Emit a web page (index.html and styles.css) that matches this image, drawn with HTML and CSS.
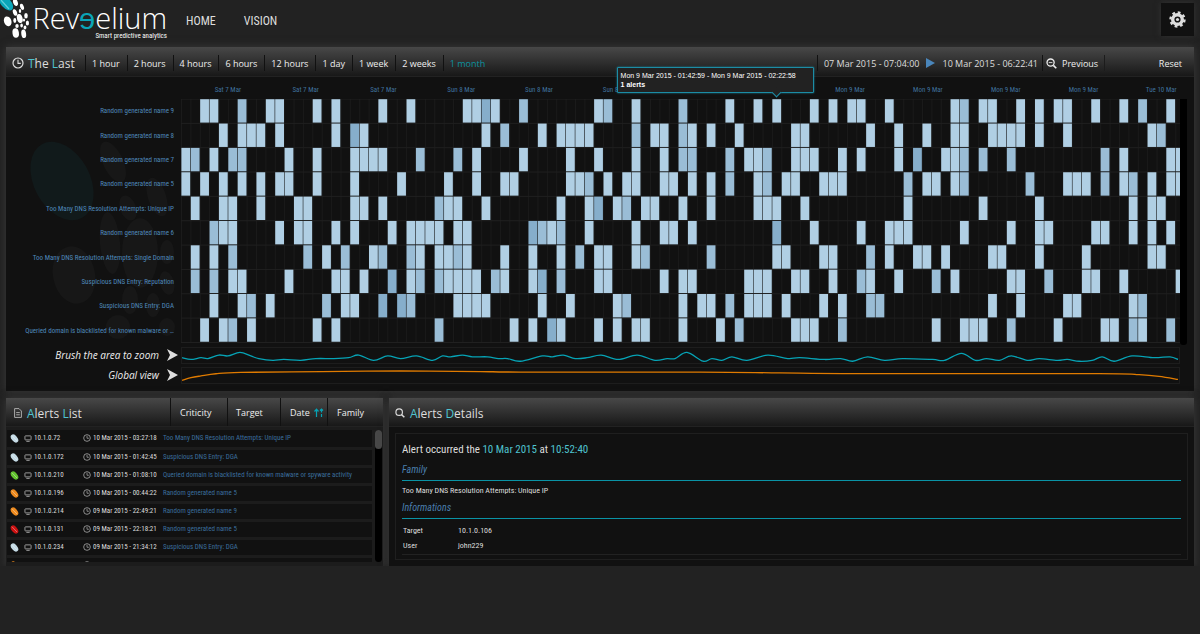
FILE: index.html
```
<!DOCTYPE html>
<html lang="en">
<head>
    <meta charset="UTF-8">
    <meta name="viewport" content="width=device-width, initial-scale=1.0">
    <title>Reveelium</title>
    <link rel="stylesheet" href="styles.css">
</head>
<body>
    <svg class="defs" width="0" height="0">
        <symbol id="icon-clock" viewBox="0 0 12 12">
            <circle cx="6" cy="6" r="5" fill="none" stroke="currentColor" stroke-width="1.2"/>
            <path d="M6 2.8V6.4H8.8" fill="none" stroke="currentColor" stroke-width="1.1"/>
        </symbol>
        <symbol id="icon-screen" viewBox="0 0 9 8">
            <rect x="1" y="1" width="7" height="4.6" rx=".6" fill="none" stroke="currentColor"/>
            <path d="M2.6 7.3h3.8" stroke="currentColor"/>
        </symbol>
        <symbol id="icon-search" viewBox="0 0 12 12">
            <circle cx="5" cy="5" r="3.9" fill="none" stroke="currentColor" stroke-width="1.4"/>
            <path d="M8 8l3.2 3.2" stroke="currentColor" stroke-width="1.8"/>
        </symbol>
        <symbol id="icon-leaf" viewBox="0 0 10 10">
            <ellipse cx="5" cy="5" rx="3.2" ry="5.2" transform="rotate(-40 5 5)" fill="currentColor"/>
            <path d="M2 1.8L8 8" stroke="#fff" stroke-width=".7" opacity=".6"/>
        </symbol>
    </svg>

    <header class="topbar">
        <a href="#" class="logo">
            <svg class="logo-mark" viewBox="0 0 31 40">
                <ellipse cx="6" cy="3" rx="5" ry="9" transform="rotate(-42 6 3)" fill="#0aa5b8"/>
                <path d="M1 0L9 9" stroke="#5fd0dc" stroke-width="1.2"/>
                <g fill="#fff">
                    <ellipse cx="15.5" cy="2.5" rx="2.3" ry="3.6" transform="rotate(-20 15.5 2.5)"/>
                    <ellipse cx="22" cy="6.8" rx="1.8" ry="3.2" transform="rotate(-20 22 6.8)"/>
                    <ellipse cx="15" cy="12.5" rx="2" ry="3.4" transform="rotate(-20 15 12.5)"/>
                    <ellipse cx="20" cy="11" rx="1.2" ry="2"/>
                    <ellipse cx="7.7" cy="21.3" rx="3.7" ry="5" transform="rotate(-20 7.7 21.3)"/>
                    <ellipse cx="19.8" cy="18.5" rx="2.8" ry="4.6" transform="rotate(-15 19.8 18.5)"/>
                    <ellipse cx="14.8" cy="20.5" rx="1.5" ry="2.4"/>
                    <ellipse cx="26" cy="15.7" rx="1.8" ry="2.8"/>
                    <ellipse cx="24" cy="20" rx="1.1" ry="1.6"/>
                    <ellipse cx="27.4" cy="23" rx="1.6" ry="2.6"/>
                    <ellipse cx="17" cy="26" rx="1.7" ry="1.9"/>
                    <ellipse cx="21.6" cy="25.6" rx="1.3" ry="2"/>
                    <ellipse cx="25" cy="27.6" rx="1.4" ry="2"/>
                    <ellipse cx="15.7" cy="33" rx="3.2" ry="4.8" transform="rotate(-8 15.7 33)"/>
                    <ellipse cx="23.7" cy="33.8" rx="2.4" ry="4.3" transform="rotate(-8 23.7 33.8)"/>
                </g>
            </svg>
            <span class="logo-text">
                <span class="logo-name">Rev<em>ɘ</em>elium</span>
                <span class="logo-tag">Smart predictive analytics</span>
            </span>
        </a>
        <nav class="nav">
            <a href="#">HOME</a>
            <a href="#">VISION</a>
        </nav>
        <button class="settings" aria-label="Settings">
            <svg width="17" height="17" viewBox="0 0 17 17">
                <circle cx="8.5" cy="8.5" r="4.8" fill="none" stroke="#ddd" stroke-width="3.4"/>
                <circle cx="8.5" cy="8.5" r="7" fill="none" stroke="#ddd" stroke-width="2.4" stroke-dasharray="2.75 2.75"/>
                <circle cx="8.5" cy="8.5" r="1.6" fill="#ddd"/>
            </svg>
        </button>
    </header>

    <main>
        <section class="panel timeline">
            <div class="panel-head">
                <h2><svg width="12" height="12"><use href="#icon-clock"/></svg><span><b>T</b>he <b>L</b>ast</span></h2>
                <div class="ranges">
                    <button>1 hour</button>
                    <button>2 hours</button>
                    <button>4 hours</button>
                    <button>6 hours</button>
                    <button>12 hours</button>
                    <button>1 day</button>
                    <button>1 week</button>
                    <button>2 weeks</button>
                    <button class="active">1 month</button>
                </div>
                <div class="period">
                    <span>07 Mar 2015 - 07:04:00</span>
                    <svg width="9" height="10" viewBox="0 0 9 10"><path d="M0 0L9 5L0 10z" fill="#4a86bb"/></svg>
                    <span>10 Mar 2015 - 06:22:41</span>
                </div>
                <button class="previous">
                    <svg width="11" height="11" viewBox="0 0 12 12"><use href="#icon-search"/><path d="M3 5h4" stroke="#ddd"/></svg>
                    Previous
                </button>
                <button class="reset">Reset</button>
            </div>

            <div class="chart">
                <svg class="watermark" viewBox="0 0 190 310">
                    <g fill="#171717">
                        <ellipse cx="56" cy="104" rx="28" ry="42" transform="rotate(-28 56 104)" fill="#111a1b"/>
                        <ellipse cx="68" cy="198" rx="21" ry="29" transform="rotate(-12 68 198)"/>
                        <ellipse cx="107" cy="85" rx="10" ry="22" transform="rotate(-25 107 85)"/>
                        <ellipse cx="151" cy="120" rx="9" ry="20" transform="rotate(-18 151 120)"/>
                        <ellipse cx="122" cy="131" rx="8" ry="13" transform="rotate(-20 122 131)"/>
                        <ellipse cx="104" cy="166" rx="10" ry="31" transform="rotate(-5 104 166)"/>
                        <ellipse cx="134" cy="176" rx="18" ry="35"/>
                        <ellipse cx="161" cy="175" rx="7" ry="12"/>
                        <ellipse cx="161" cy="206" rx="7" ry="12" transform="rotate(-15 161 206)"/>
                        <ellipse cx="124" cy="223" rx="8" ry="14"/>
                        <ellipse cx="147" cy="228" rx="7" ry="12"/>
                        <ellipse cx="112" cy="250" rx="12" ry="12"/>
                        <ellipse cx="161" cy="250" rx="8" ry="9"/>
                    </g>
                </svg>

                <ul class="labels">
                    <li>Random generated name 9</li>
                    <li>Random generated name 8</li>
                    <li>Random generated name 7</li>
                    <li>Random generated name 5</li>
                    <li>Too Many DNS Resolution Attempts: Unique IP</li>
                    <li>Random generated name 6</li>
                    <li>Too Many DNS Resolution Attempts: Single Domain</li>
                    <li>Suspicious DNS Entry: Reputation</li>
                    <li>Suspicious DNS Entry: DGA</li>
                    <li>Queried domain is blacklisted for known malware or …</li>
                </ul>

                <div class="plot">
                    <div class="axis" id="axis"></div>
                    <svg class="heatmap" id="heatmap" viewBox="0 0 999 244" preserveAspectRatio="none"></svg>
                    <div class="tooltip">
                        Mon 9 Mar 2015 - 01:42:59 - Mon 9 Mar 2015 - 02:22:58<br>
                        <strong>1 alerts</strong>
                    </div>
                </div>
                <div class="track"></div>

                <div class="brush-label">Brush the area to zoom
                    <svg width="11" height="12" viewBox="0 0 11 12"><path d="M0 0L11 6L0 12L3 6z" fill="#ddd"/></svg>
                </div>
                <svg class="brush" viewBox="0 0 999 17" preserveAspectRatio="none"><path id="brush-line" stroke="#06a3b5"/></svg>
                <div class="brush-label">Global view
                    <svg width="11" height="12" viewBox="0 0 11 12"><path d="M0 0L11 6L0 12L3 6z" fill="#ddd"/></svg>
                </div>
                <svg class="brush" viewBox="0 0 999 17" preserveAspectRatio="none"><path id="global-line" stroke="#e07b00"/></svg>
            </div>
        </section>

        <div class="bottom">
            <section class="panel list">
                <div class="panel-head">
                    <h2><svg width="8" height="10" viewBox="0 0 8 10"><path d="M.6.6h4.4l2.4 2.4v6.4H.6zM2.2 4.6h3.6M2.2 6.8h3.6" fill="none" stroke="#aaa"/></svg><span><b>A</b>lerts <b>L</b>ist</span></h2>
                    <div class="sorts">
                        <button>Criticity</button>
                        <button>Target</button>
                        <button>Date <svg width="10" height="9" viewBox="0 0 10 9"><path d="M2.5 9V1.5M.5 3.5l2-2.4 2 2.4M7.5 9V6M7.5 4.5v-3M6 2.5l1.5-1.4L9 2.5" fill="none" stroke="#06a3b5" stroke-width="1.2"/></svg></button>
                        <button>Family</button>
                    </div>
                </div>
                <div class="list-body">
                    <div class="rows">
                        <table><tbody id="alerts"></tbody></table>
                    </div>
                    <div class="scroll"><div class="thumb"></div></div>
                </div>
            </section>

            <section class="panel details">
                <div class="panel-head">
                    <h2><svg width="10" height="10"><use href="#icon-search"/></svg><span><b>A</b>lerts <b>D</b>etails</span></h2>
                </div>
                <div class="details-body">
                    <p class="occurred">Alert occurred the <b>10 Mar 2015</b> at <b>10:52:40</b></p>
                    <h3>Family</h3>
                    <p class="family">Too Many DNS Resolution Attempts: Unique IP</p>
                    <h3>Informations</h3>
                    <table class="infos">
                        <tr><th>Target</th><td>10.1.0.106</td></tr>
                        <tr><th>User</th><td>john229</td></tr>
                    </table>
                </div>
            </section>
        </div>
    </main>
    <script src="script.js"></script>
</body>
</html>
```
FILE: styles.css
```
* {
    box-sizing: border-box;
}
body {
    margin: 0;
    background: #222;
    color: #ddd;
    font-family: "Open Sans", "Noto Sans", sans-serif;
    font-size: 9px;
}
a {
    color: inherit;
    text-decoration: none;
}
h2, h3, p, ul {
    margin: 0;
    padding: 0;
    font-weight: normal;
}
button {
    padding: 0;
    border: none;
    background: none;
    color: #eee;
    font: inherit;
    white-space: nowrap;
    cursor: pointer;
}
table {
    border-collapse: collapse;
}
.defs {
    position: absolute;
}

/* top bar */
.topbar {
    display: flex;
    height: 47px;
    padding-right: 6px;
}
.logo {
    display: flex;
    width: 167px;
}
.logo-mark {
    width: 31px;
    height: 40px;
}
.logo-text {
    display: flex;
    flex-direction: column;
    align-items: flex-end;
    flex: 1;
    color: #fff;
}
.logo-name {
    font-family: "Open Sans", sans-serif;
    font-weight: 300;
    font-size: 29px;
    line-height: 36px;
    height: 30px;
}
.logo-name em {
    font-style: normal;
    font-weight: 400;
    color: #0aa5b8;
}
.logo-tag {
    font-family: "Roboto Condensed", Roboto, sans-serif;
    font-size: 7px;
    line-height: 12px;
}
.nav {
    display: flex;
    flex: 1;
    gap: 28px;
    padding: 11px 0 0 19px;
    font-family: "Roboto Condensed", Roboto, sans-serif;
    font-size: 12px;
    line-height: 20px;
}
.settings {
    display: flex;
    align-items: center;
    justify-content: center;
    width: 33px;
    height: 33px;
    margin-top: 3px;
    background: #111;
    box-shadow: 0 0 6px #333;
}

/* panels */
main {
    display: flex;
    flex-direction: column;
    gap: 7px;
    padding: 0 6px;
}
.panel {
    background: #111;
    box-shadow: 0 0 8px #3a3a3a;
}
.panel-head {
    display: flex;
    height: 30px;
    background: linear-gradient(#484848, #181818);
    border-bottom: 1px solid #222;
}
.panel-head h2 {
    display: flex;
    align-items: center;
    gap: 4px;
    padding: 2px 0 0 6px;
    color: #ddd;
    font-size: 12px;
}
.panel-head b {
    font-weight: normal;
    color: #4fc3cf;
}

/* timeline */
.timeline .panel-head {
    align-items: center;
    padding-top: 3px;
}
.timeline h2 {
    width: 79px;
    padding-top: 0;
}
.ranges {
    display: flex;
    flex: 1;
}
.ranges button {
    height: 16px;
    padding: 0 7px 0 6px;
    border-left: 1px solid #111;
}
.ranges .active {
    color: #0c93a0;
}
.period {
    display: flex;
    align-items: center;
    gap: 7px;
    height: 16px;
    padding: 0 4px 0 6px;
    border-left: 1px solid #111;
}
.previous {
    display: flex;
    align-items: center;
    gap: 5px;
    width: 63px;
    height: 16px;
    padding-left: 3px;
    border-left: 1px solid #111;
    border-right: 1px solid #1c1c1c;
}
.reset {
    width: 89px;
    padding-right: 12px;
    text-align: right;
}
.chart {
    position: relative;
    display: grid;
    grid-template-columns: 175px 1fr 14px;
    grid-template-rows: 266px 20px 20px;
    padding-bottom: 8px;
}
.watermark {
    position: absolute;
    top: 0;
    left: 0;
    width: 190px;
}
.labels {
    position: relative;
    display: grid;
    grid-auto-rows: 1fr;
    padding: 22px 7px 0 0;
    list-style: none;
    text-align: right;
    white-space: nowrap;
    font-family: "Roboto Condensed", Roboto, sans-serif;
    font-size: 7px;
    color: #4f88ba;
}
.labels li {
    display: flex;
    align-items: center;
    justify-content: flex-end;
}
.plot {
    position: relative;
    display: flex;
    flex-direction: column;
    min-width: 0;
}
.axis {
    display: flex;
    height: 22px;
    padding-left: 8px;
    font-family: "Roboto Condensed", Roboto, sans-serif;
    font-size: 7px;
    line-height: 27px;
    color: #3f709c;
}
.axis span {
    flex: 0 0 7.85%;
    text-align: center;
    white-space: nowrap;
}
.heatmap {
    display: block;
    width: 100%;
    height: 244px;
}
.track {
    width: 7px;
    height: 246px;
    margin-top: 22px;
    border-radius: 0 0 3px 3px;
    background: #000;
}
.tooltip {
    position: absolute;
    top: -10px;
    left: 43.6%;
    width: 197px;
    padding: 3px;
    border: 1px solid #1c8ca5;
    border-radius: 1px;
    background: #222;
    box-shadow: 0 0 2px #1c8ca5;
    color: #fff;
    font-family: "Liberation Sans", Arial, sans-serif;
    font-size: 7px;
    line-height: 9px;
    white-space: nowrap;
}
.tooltip::after {
    content: "";
    position: absolute;
    right: 33px;
    bottom: -4px;
    width: 6px;
    height: 6px;
    border: solid #1c8ca5;
    border-width: 0 1px 1px 0;
    background: #222;
    transform: rotate(45deg);
}
.brush-label {
    position: relative;
    display: flex;
    grid-column: 1;
    align-items: center;
    justify-content: flex-end;
    gap: 8px;
    padding: 3px 3px 0 0;
    color: #eee;
    font-size: 10px;
    font-style: italic;
}
.brush {
    grid-column: 2;
    width: 100%;
    height: 17px;
    margin-top: 4px;
    border: 1px solid #1d1d1d;
}
.brush path {
    fill: none;
    stroke-width: 1.3;
    vector-effect: non-scaling-stroke;
}

/* bottom panels */
.bottom {
    display: grid;
    grid-template-columns: 377px 1fr;
    gap: 6px;
}
.list .panel-head, .details .panel-head {
    height: 29px;
}
.list {
    background: #1c1c1c;
}
.list h2 {
    flex: 1;
    padding-left: 8px;
    gap: 5px;
}
.details h2 {
    gap: 5px;
}
.sorts {
    display: flex;
}
.sorts button {
    width: 57px;
    padding: 0 9px;
    border-left: 1px solid #111;
    text-align: left;
}
.sorts button:nth-child(2) {
    width: 53px;
    padding: 0 8px;
}
.sorts button:nth-child(3) {
    display: flex;
    align-items: center;
    gap: 4px;
    width: 47px;
    padding: 0 0 0 9px;
}
.sorts button:nth-child(4) {
    width: 56px;
}
.list-body {
    display: flex;
    justify-content: space-between;
    padding: 3px 1px;
}
.rows {
    width: 365px;
    height: 132px;
    overflow: hidden;
}
.rows table {
    width: 100%;
    font-family: "Roboto Condensed", Roboto, sans-serif;
    font-size: 7px;
    color: #ddd;
}
.rows td {
    height: 18px;
    padding: 0;
    border-bottom: 3px solid #1c1c1c;
    background: #111;
    white-space: nowrap;
}
.rows td svg {
    display: inline-block;
    vertical-align: middle;
    margin-right: 2px;
    color: #aaa;
}
.rows td:first-child {
    width: 17px;
    padding-left: 3px;
}
.rows td:nth-child(2) {
    width: 59px;
}
.rows td:nth-child(3) {
    width: 80px;
}
.rows td:last-child {
    color: #3b6d9c;
}
.rows .info {
    color: #c5dbe6;
}
.rows .low {
    color: #62c22e;
}
.rows .medium {
    color: #ee8a1d;
}
.rows .high {
    color: #cc1111;
}
.scroll {
    width: 7px;
    border-radius: 4px;
    background: #000;
}
.thumb {
    height: 19px;
    border-radius: 4px;
    background: #484848;
}
.details-body {
    margin: 6px;
    padding: 4px 6px;
    border: 1px solid #1f1f1f;
    font-family: "Roboto Condensed", Roboto, sans-serif;
    font-size: 8px;
}
.occurred {
    font-size: 11px;
    line-height: 24px;
}
.occurred b {
    font-weight: normal;
    color: #4fc3cf;
}
.details-body h3 {
    height: 19px;
    border-bottom: 1px solid #0a93a5;
    color: #4a7fae;
    font-size: 10px;
    font-style: italic;
    line-height: 15px;
}
.family {
    line-height: 19px;
}
.infos {
    width: 100%;
    margin-top: 3px;
    border-bottom: 1px solid #222;
}
.infos th, .infos td {
    height: 16px;
    padding: 0 1px;
    font-weight: normal;
    text-align: left;
}
.infos th {
    width: 55px;
}
```
FILE: script.js
```
// column numbers with alerts, one line per family; a = several, b = many
const rows = [
    "2 3 6a 9 10 14 16 21 24 30 31 32b 33 36a 44 45a 48 53a 58 61 63 67 69 71 72 75 82 83a 85 86 89 91 93 94 97 100 102a 105",
    "4 6 7 8 10 16 18b 19 32 34a 38 40 41 42 43 48a 50 51 53a 54 56 59 65 66 73 76 79 82 83 86 87 88 89 91 94 103 104a",
    "0 1a 3 5a 6a 11 14 18 19 20 21 25a 29a 31 36 41 44 48 51 53a 54a 58a 60 61 62a 65 66 67 70 72 76 78b 81 82 83a 85a 88a 98a 100 105 106",
    "0 2 4 6 8 10 11 14 18 23 28 31 34 35 41 42 43a 45 47 48 51 52 54 56 58a 61 62a 64 65 68 69 70 77a 79 80 82 83a 90a 94 95 96 98a 100 101a 103 105 106",
    "1 4 5 8 12 13 18 19 21 27a 28 29 32 40 43 44b 46 47a 49 50 53 56 61 62 63 66 77 85 91 101 103 104",
    "3a 4 5 10 12 13 16 18 22 24 25 26 27 29 30 37b 38a 39 40a 43 48 51 52 54 63b 67 72 75 76 77 83 88 91 92 97 98 101 103 105",
    "1 3 5a 13a 15 17a 20 21a 24a 25 27 28 29a 30 34 37 40 42a 44 45 48 49a 56a 63 64 68 69 73a 75 78 79 81 86 87 91 96 103 104",
    "1a 3a 5 6 11 16 17 19 22b 24 25a 27a 28 29 30 31 33a 34 37 38b 40a 44 45 51 53 54 60 61 62 65 66 69 72a 73 76 80a 82 88 89 92a 96 97 100 106",
    "3 6 7a 9 15a 17 18 21b 23b 24a 29 30 31 32 38 41 46 47a 53 55 56 58a 60 61 62 64 68 70 73a 74a 86 89 94 95 101 102a",
    "2 4 5a 7 14 16 27a 35 37 39b 40 44 46 48 49 53 57 59a 65 66 67 70a 80 83 84 85 88a 93 98 99 101a 102 105a"
];
const colors = { "": "#b0cfe4", a: "#9abdd6", b: "#86aecb" };
const cellWidth = 9.38;
const cellHeight = 24.35;

let shapes = "";
for (let i = 0; i <= 106; i++) {
    shapes += `<rect x="${i * cellWidth}" y="0" width="1" height="244" fill="#1b1b1b"/>`;
}
for (let i = 0; i <= 10; i++) {
    shapes += `<rect x="0" y="${i * cellHeight - 0.5}" width="999" height="1" fill="#202020"/>`;
}
rows.forEach((row, y) => {
    row.split(" ").forEach((cell) => {
        const x = parseInt(cell);
        const level = cell.replace(/\d+/, "");
        shapes += `<rect x="${x * cellWidth + 0.4}" y="${y * cellHeight + 0.2}" width="8.8" height="23.4" fill="${colors[level]}"/>`;
    });
});
document.getElementById("heatmap").innerHTML = shapes;

const days = ["Sat 7 Mar", "Sat 7 Mar", "Sat 7 Mar", "Sun 8 Mar", "Sun 8 Mar", "Sun 8 Mar", "Sun 8 Mar",
    "Mon 9 Mar", "Mon 9 Mar", "Mon 9 Mar", "Mon 9 Mar", "Mon 9 Mar", "Tue 10 Mar"];
document.getElementById("axis").innerHTML = days.map((day) => `<span>${day}</span>`).join("");

// smooth line through the points
function curve(points) {
    let d = `M${points[0]}`;
    for (let i = 0; i < points.length - 1; i++) {
        const p0 = points[i - 1] || points[i];
        const p1 = points[i];
        const p2 = points[i + 1];
        const p3 = points[i + 2] || p2;
        d += `C${p1[0] + (p2[0] - p0[0]) / 6},${p1[1] + (p2[1] - p0[1]) / 6} ${p2[0] - (p3[0] - p1[0]) / 6},${p2[1] - (p3[1] - p1[1]) / 6} ${p2}`;
    }
    return d;
}

document.getElementById("brush-line").setAttribute("d", curve([
    [0, 11], [9, 13], [19, 11], [26, 12], [37, 8], [46, 9], [58, 5], [69, 9], [77, 12], [91, 14], [102, 13], [119, 14],
    [134, 12], [152, 12], [167, 11], [177, 8], [192, 14], [206, 9], [219, 12], [235, 9], [251, 14], [261, 9], [269, 10],
    [281, 8], [291, 10], [306, 10], [317, 12], [326, 12], [339, 15], [361, 9], [371, 10], [382, 8], [394, 12], [406, 11],
    [420, 8], [437, 13], [456, 8], [474, 14], [486, 12], [494, 12], [506, 5], [522, 15], [531, 12], [541, 14], [551, 10],
    [566, 14], [587, 8], [607, 12], [619, 11], [644, 13], [660, 12], [672, 15], [687, 10], [704, 14], [722, 12],
    [752, 13], [764, 14], [781, 6], [795, 14], [806, 12], [819, 14], [831, 9], [847, 14], [859, 12], [877, 14],
    [887, 13], [899, 15], [912, 14], [922, 10], [934, 15], [952, 9], [974, 11], [990, 10], [998, 13]
]));
document.getElementById("global-line").setAttribute("d", curve([
    [0, 14], [9, 11], [19, 9], [34, 6.5], [59, 5], [140, 4], [219, 3.4], [299, 4], [339, 4.6], [519, 4.6], [599, 5.6],
    [679, 6.4], [919, 6.4], [959, 7.6], [979, 9.5], [998, 13]
]));

const alerts = [
    ["info", "10.1.0.72", "10 Mar 2015 - 03:27:18", "Too Many DNS Resolution Attempts: Unique IP"],
    ["info", "10.1.0.172", "10 Mar 2015 - 01:42:45", "Suspicious DNS Entry: DGA"],
    ["low", "10.1.0.210", "10 Mar 2015 - 01:08:10", "Queried domain is blacklisted for known malware or spyware activity"],
    ["medium", "10.1.0.196", "10 Mar 2015 - 00:44:22", "Random generated name 5"],
    ["medium", "10.1.0.214", "09 Mar 2015 - 22:49:21", "Random generated name 9"],
    ["high", "10.1.0.131", "09 Mar 2015 - 22:18:21", "Random generated name 5"],
    ["info", "10.1.0.234", "09 Mar 2015 - 21:34:12", "Suspicious DNS Entry: DGA"],
    ["medium", "10.1.0.186", "09 Mar 2015 - 20:58:41", "Random generated name 8"]
];
document.getElementById("alerts").innerHTML = alerts.map(([level, target, date, family]) => `
    <tr>
        <td><svg class="${level}" width="9" height="9"><use href="#icon-leaf"/></svg></td>
        <td><svg width="8" height="7"><use href="#icon-screen"/></svg>${target}</td>
        <td><svg width="8" height="8"><use href="#icon-clock"/></svg>${date}</td>
        <td>${family}</td>
    </tr>`).join("");
```
